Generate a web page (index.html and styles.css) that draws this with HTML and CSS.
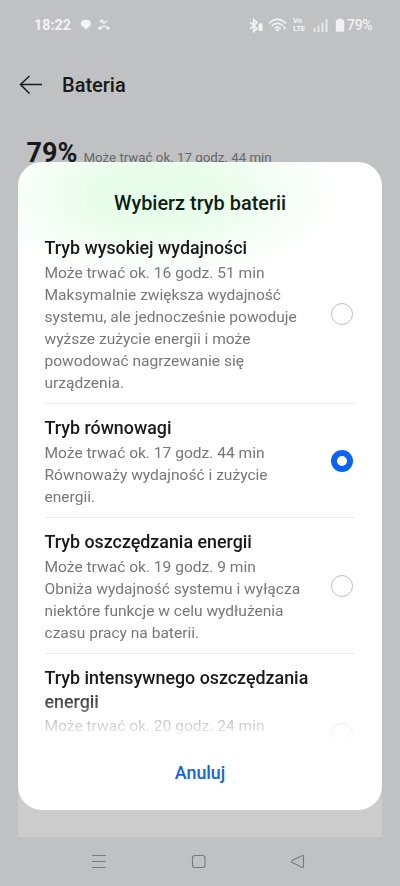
FILE: index.html
```html
<!DOCTYPE html>
<html lang="pl">
<head>
<meta charset="utf-8">
<title>Bateria</title>
<link rel="stylesheet" href="styles.css">
</head>
<body>
<div class="screen">
  <div class="status">
    <span class="clock">18:22</span>
    <svg class="chat" width="12" height="12" viewBox="0 0 12 12"><path d="M5 0.8C8.500 .3 11 2 11 4.600C11 7 9 8.500 7.500 9L5.500 11L4.500 8.500C2 8 .8 6.500 .8 4.500C.8 2.500 2.500 1 5 .8Z" fill="#f3f3f4"/></svg>
    <svg class="missed" width="14" height="12" viewBox="0 0 14 12"><path d="M.8 9.200C4 5.800 10 5.800 13.200 9.200L11.200 11L9.200 9.800V8.300Q7 7.700 4.800 8.300V9.800L2.800 11Z" fill="#f3f3f4"/><path d="M4 4V1.300H6.500M4.200 1.500L7 4.500L10.200 1.500" fill="none" stroke="#f3f3f4" stroke-width="1.200"/></svg>
    <span class="grow"></span>
    <svg class="bt" width="15" height="15" viewBox="0 0 15 15"><path d="M1 4L8 10.500L4.700 13.500V1.500L8 4.500L1 11" fill="none" stroke="#f3f3f4" stroke-width="1.600"/><path d="M9.500 6h1V5h2v1h1v7h-4Z" fill="#f3f3f4"/></svg>
    <svg class="wifi" width="20" height="15" viewBox="0 0 20 15"><g fill="none" stroke="#f3f3f4" stroke-width="1.600"><path d="M1 5.300Q9.500-2.700 18 5.300"/><path d="M3.700 8Q9.500 2.700 15.300 8"/><path d="M6.300 10.500Q9.500 7.800 12.700 10.500"/></g><path d="M7.500 11.500Q9.500 10 11.500 11.500L9.500 13.800Z" fill="#f3f3f4"/><path d="M15 10l1.500-1.500L18 10l-1.500 1.500Z" fill="#f3f3f4"/></svg>
    <span class="volte"><span>Vo</span><span>LTE</span></span>
    <svg class="signal" width="16" height="15" viewBox="0 0 16 15"><g fill="#e6e7e8"><rect x=".5" y="10" width="2" height="4"/><rect x="4.500" y="7.500" width="2" height="6.500"/><rect x="8.500" y="4.500" width="2" height="9.500"/><rect x="12.500" y="1" width="2" height="13"/></g></svg>
    <svg class="batt" width="10" height="15" viewBox="0 0 10 15"><path d="M2.500 2V.7h5V2h.5q1.200 0 1.200 1.200V12.500q0 1.200-1.200 1.200H2Q.8 13.700.8 12.500V3.200Q.8 2 2 2Z" fill="#f3f3f4"/></svg>
    <span class="pct">79%</span>
  </div>
  <header class="header">
    <svg width="24" height="20" viewBox="0 0 24 20"><path d="M10.500 1L1.500 9.500L10.500 18.500M1.500 9.500H23" fill="none" stroke="#1b1b1d" stroke-width="1.500"/></svg>
    <h1>Bateria</h1>
  </header>
  <div class="level"><b>79%</b><span>Może trwać ok. 17 godz. 44 min</span></div>
  <div class="card"></div>
  <nav class="nav">
    <svg width="16" height="16" viewBox="0 0 16 16"><path d="M1.200 1.500H14.800M1.200 7.500H14.800M1.200 13.500H14.800"/></svg>
    <svg width="16" height="16" viewBox="0 0 16 16"><rect x="1.500" y="1.500" width="12.500" height="12" rx="2.500"/></svg>
    <svg width="16" height="16" viewBox="0 0 16 16"><path d="M1.800 6.800L12.300 1.500Q13.500 1.200 13.500 2.300V12.700Q13.500 13.800 12.300 13.400L1.800 8.300Q.8 7.500 1.800 6.800Z"/></svg>
  </nav>
</div>
<div class="dialog">
  <h2>Wybierz tryb baterii</h2>
  <div class="options">
    <div class="option"><div class="text"><h3>Tryb wysokiej wydajności</h3><p>Może trwać ok. 16 godz. 51 min<br>Maksymalnie zwiększa wydajność<br>systemu, ale jednocześnie powoduje<br>wyższe zużycie energii i może<br>powodować nagrzewanie się<br>urządzenia.</p></div><i class="radio"></i></div>
    <div class="option"><div class="text"><h3>Tryb równowagi</h3><p>Może trwać ok. 17 godz. 44 min<br>Równoważy wydajność i zużycie<br>energii.</p></div><i class="radio on"></i></div>
    <div class="option"><div class="text"><h3>Tryb oszczędzania energii</h3><p>Może trwać ok. 19 godz. 9 min<br>Obniża wydajność systemu i wyłącza<br>niektóre funkcje w celu wydłużenia<br>czasu pracy na baterii.</p></div><i class="radio"></i></div>
    <div class="option last"><div class="text"><h3>Tryb intensywnego oszczędzania<br>energii</h3><p>Może trwać ok. 20 godz. 24 min<br>Oszczędza energię baterii</p></div><i class="radio"></i></div>
  </div>
  <button class="cancel">Anuluj</button>
</div>
</body>
</html>
```

FILE: styles.css
```css
* { box-sizing: border-box; }
body { margin: 0; width: 400px; height: 886px; overflow: hidden; background: #c0c1c3; font-family: Roboto, sans-serif; position: relative; }
h1, h2, h3, p { margin: 0; font-weight: 500; }
svg { display: block; flex: none; }
.screen { height: 886px; display: flex; flex-direction: column; }
.status { height: 50px; padding: 0 28px 0 34px; display: flex; align-items: center; color: #f3f3f4; flex: none; }
.clock { font-size: 14.300px; font-weight: 700; width: 46px; }
.missed { margin-left: 5px; }
.grow { flex: 1; }
.wifi { margin-left: 4px; }
.volte { display: flex; flex-direction: column; width: 13px; font-size: 8px; line-height: 8px; font-weight: 700; letter-spacing: -.3px; margin: 0 7px 0 5px; }
.batt { margin: 0 2px 0 6px; }
.pct { font-size: 14px; font-weight: 500; letter-spacing: -.3px; width: 25px; }
.header { height: 70px; display: flex; align-items: center; padding-left: 19px; gap: 19px; flex: none; }
.header h1 { font-size: 20px; color: #19191b; }
.level { height: 60px; padding: 17px 0 0 26.500px; display: flex; align-items: baseline; gap: 6px; flex: none; color: #19191b; white-space: nowrap; }
.level b { font-size: 27px; font-weight: 700; }
.level span { font-size: 13.300px; color: #67686a; }
.card { flex: 1; margin: 0 18px; background: #cccccd; }
.nav { height: 49px; display: flex; align-items: center; justify-content: space-between; padding: 0 94px 0 91px; flex: none; }
.nav svg { fill: none; stroke: #77787a; stroke-width: 1.100; }
.dialog { position: absolute; left: 18px; top: 162px; width: 364px; height: 648px; border-radius: 24px; overflow: hidden; display: flex; flex-direction: column; background: radial-gradient(ellipse 185px 85px at 140px 34px, #e5fde8 0%, #e9fdeb 35%, #f5fef6 68%, #fff 100%) #fff; }
.dialog h2 { height: 61px; padding-top: 29px; line-height: 26px; font-size: 19.900px; text-align: center; color: #111d15; flex: none; }
.options { height: 521px; overflow: hidden; padding: 1px 27px 0 26.500px; flex: none; -webkit-mask-image: linear-gradient(#000 468px, transparent 520px); mask-image: linear-gradient(#000 468px, transparent 520px); }
.option { display: flex; align-items: center; justify-content: space-between; padding: 12px 2px 9px 0; border-bottom: 1px solid #ebebeb; white-space: nowrap; }
.option h3 { font-size: 17.850px; line-height: 24px; color: #19191a; }
.option p { margin-top: 2px; font-size: 15.550px; line-height: 22px; font-weight: 400; color: #777; }
.radio { width: 22px; height: 22px; margin-bottom: 3px; border: 1.500px solid #bebebe; border-radius: 50%; flex: none; }
.radio.on { border: 6px solid #0b63f6; background: #fff; }
.last { height: 160px; }
.last .text { align-self: flex-start; }
.last p { margin-top: 1px; }
.cancel { border: 0; background: none; padding: 0; margin-top: 17px; font: 500 17.800px/24px Roboto, sans-serif; color: #1463dd; }
```
